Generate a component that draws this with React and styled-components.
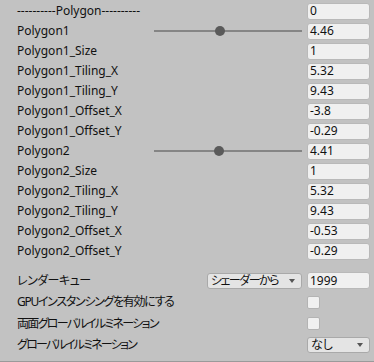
import React from 'react'
import styled, { createGlobalStyle } from 'styled-components'

const GlobalStyle = createGlobalStyle`
    html, body {
        margin: 0;
        padding: 0;
        background: #c2c2c2;
    }
    body {
        font-family: "Noto Sans", "Noto Sans CJK JP", sans-serif;
        font-size: 12px;
        color: #111;
    }
`;

const Panel = styled.div`
    width: 374px;
    height: 362px;
    box-sizing: border-box;
    padding-top: 1px;
    background: #c2c2c2;
    border-bottom: 1px solid #9a9a9a;
    display: flex;
    flex-direction: column;
`;

const Row = styled.div`
    display: flex;
    align-items: center;
    height: ${p => p.tall ? '21.5px' : '20px'};
    padding: 0 4px 0 17px;
    flex-shrink: 0;
`;

const Label = styled.span`
    flex: ${p => p.fixed ? '0 0 137px' : '1'};
    white-space: nowrap;
    font-feature-settings: "palt";
    letter-spacing: ${p => p.squeeze || 0}px;
    line-height: 1;
`;

const Field = styled.div`
    width: 63px;
    height: 17px;
    box-sizing: border-box;
    background: #f0f0f0;
    border: 1px solid #b9b9b9;
    border-radius: 3px;
    padding-left: 2px;
    display: flex;
    align-items: center;
    line-height: 1;
`;

const SliderTrack = styled.div`
    position: relative;
    width: 148px;
    height: 2px;
    margin-right: 5px;
    background: #858585;
`;

const Thumb = styled.div`
    position: absolute;
    top: -4px;
    width: 10px;
    height: 10px;
    margin-left: -5px;
    border-radius: 50%;
    background: #5a5a5a;
`;

const Dropdown = styled.div`
    width: ${p => p.width}px;
    height: 16px;
    box-sizing: border-box;
    margin-right: ${p => p.gap || 0}px;
    background: #e4e4e4;
    border: 1px solid #a9a9a9;
    border-radius: 3px;
    padding: 0 6px 0 3px;
    display: flex;
    align-items: center;
    justify-content: space-between;
    line-height: 1;
`;

const DropdownText = styled.span`
    white-space: nowrap;
    font-feature-settings: "palt";
    letter-spacing: ${p => p.squeeze || 0}px;
`;

const Arrow = styled.span`
    flex-shrink: 0;
    width: 0;
    height: 0;
    border-left: 3.5px solid transparent;
    border-right: 3.5px solid transparent;
    border-top: 4px solid #555;
`;

const Slot = styled.div`
    width: 63px;
    display: flex;
`;

const Checkbox = styled.div`
    width: 13px;
    height: 13px;
    box-sizing: border-box;
    background: #f0f0f0;
    border: 1px solid #b3b3b3;
    border-radius: 2px;
`;

const Spacer = styled.div`
    height: ${p => p.size}px;
    flex-shrink: 0;
`;

const props = [
    { label: '----------Polygon----------', value: '0' },
    { label: 'Polygon1', value: '4.46', slider: 4.46 },
    { label: 'Polygon1_Size', value: '1' },
    { label: 'Polygon1_Tiling_X', value: '5.32' },
    { label: 'Polygon1_Tiling_Y', value: '9.43' },
    { label: 'Polygon1_Offset_X', value: '-3.8' },
    { label: 'Polygon1_Offset_Y', value: '-0.29' },
    { label: 'Polygon2', value: '4.41', slider: 4.41 },
    { label: 'Polygon2_Size', value: '1' },
    { label: 'Polygon2_Tiling_X', value: '5.32' },
    { label: 'Polygon2_Tiling_Y', value: '9.43' },
    { label: 'Polygon2_Offset_X', value: '-0.53' },
    { label: 'Polygon2_Offset_Y', value: '-0.29' },
];

const App = () => {
    return (
        <Panel>
            <GlobalStyle />
            {props.map((p, i) => (
                <Row key={i}>
                    <Label fixed={p.slider !== undefined}>{p.label}</Label>
                    {p.slider !== undefined && (
                        <SliderTrack>
                            <Thumb style={{ left: `${p.slider * 10}%` }} />
                        </SliderTrack>
                    )}
                    <Field>{p.value}</Field>
                </Row>
            ))}
            <Spacer size={9} />
            <Row tall>
                <Label squeeze={-0.5}>レンダーキュー</Label>
                <Dropdown width={95} gap={5}>
                    <DropdownText squeeze={-1.5}>シェーダーから</DropdownText>
                    <Arrow />
                </Dropdown>
                <Field>1999</Field>
            </Row>
            <Row tall>
                <Label squeeze={-1.3}>GPUインスタンシングを有効にする</Label>
                <Slot><Checkbox /></Slot>
            </Row>
            <Row tall>
                <Label squeeze={-1.7}>両面グローバルイルミネーション</Label>
                <Slot><Checkbox /></Slot>
            </Row>
            <Row tall>
                <Label squeeze={-1.8}>グローバルイルミネーション</Label>
                <Dropdown width={63}>
                    <DropdownText>なし</DropdownText>
                    <Arrow />
                </Dropdown>
            </Row>
        </Panel>
    )
}

export default App
